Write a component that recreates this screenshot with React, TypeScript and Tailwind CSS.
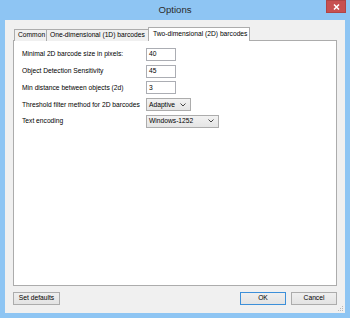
import React from "react";

const font = { fontFamily: '"Liberation Sans", Arial, sans-serif' };

const Chevron = () => (
  <svg width="6" height="4" viewBox="0 0 6 4" className="shrink-0">
    <polyline points="0.5,0.5 3,3 5.5,0.5" fill="none" stroke="#444" strokeWidth="1" />
  </svg>
);

const TextBox = ({ value }: { value: string }) => (
  <div className="w-[30px] h-[13px] border border-[#abadb3] bg-white flex items-center pl-[2px] text-[6.7px] text-black">
    {value}
  </div>
);

const Select = ({ value, width }: { value: string; width: string }) => (
  <div
    className={`${width} h-[13px] border border-[#acacac] bg-gradient-to-b from-[#f2f2f2] to-[#e5e5e5] flex items-center justify-between pl-[2px] pr-[4px] text-[6.7px] text-black`}
  >
    <span>{value}</span>
    <Chevron />
  </div>
);

const rows: { label: string; field: React.ReactNode }[] = [
  { label: "Minimal 2D barcode size in pixels:", field: <TextBox value="40" /> },
  { label: "Object Detection Sensitivity", field: <TextBox value="45" /> },
  { label: "Min distance between objects (2d)", field: <TextBox value="3" /> },
  { label: "Threshold filter method for 2D barcodes", field: <Select value="Adaptive" width="w-[45px]" /> },
  { label: "Text encoding", field: <Select value="Windows-1252" width="w-[73px]" /> },
];

const Button = ({ children, primary, className }: { children: React.ReactNode; primary?: boolean; className?: string }) => (
  <div
    className={`h-[13px] flex items-center justify-center text-[6.7px] text-black bg-gradient-to-b from-[#efefef] to-[#e3e3e3] border ${
      primary ? "border-[#3c8fd9]" : "border-[#acacac]"
    } ${className ?? ""}`}
  >
    {children}
  </div>
);

export default function App() {
  return (
    <div className="w-[350px] h-[318px] bg-[#8ec5f3] flex flex-col px-[5px] pb-[5px]" style={font}>
      {/* title bar */}
      <div className="h-[20px] relative flex items-center justify-center">
        <span className="text-[9.6px] text-[#2b2b2b]">Options</span>
        <div className="absolute right-[-1px] top-0 w-[20px] h-[13px] bg-[#c75050] border border-[#b04545] flex items-center justify-center">
          <svg width="7" height="6" viewBox="0 0 7 6">
            <path d="M1 0.5 L6 5.5 M6 0.5 L1 5.5" stroke="white" strokeWidth="1.5" />
          </svg>
        </div>
      </div>

      {/* client area */}
      <div className="flex-1 bg-[#f0f0f0] flex flex-col px-[8px] pt-[7px] pb-[8px] relative">
        {/* tabs */}
        <div className="flex items-end h-[14px] pl-[1px] relative z-10">
          <div className="w-[33px] h-[12px] border border-[#acacac] border-b-0 bg-[#f0f0f0] flex items-center pl-[3px] text-[6.7px] text-black">
            Common
          </div>
          <div className="w-[102px] h-[12px] border border-[#acacac] border-b-0 border-l-0 bg-[#f0f0f0] flex items-center pl-[3px] text-[6.7px] text-black">
            One-dimensional (1D) barcodes
          </div>
          <div className="w-[102px] h-[14px] border border-[#acacac] border-b-0 bg-white flex items-center pl-[4px] pb-[1px] text-[6.7px] text-black -ml-px">
            Two-dimensional (2D) barcodes
          </div>
        </div>

        {/* panel */}
        <div className="flex-1 -mt-px border border-[#acacac] bg-white pt-[7px] pl-[8px] flex flex-col gap-[3.7px]">
          {rows.map((r) => (
            <div key={r.label} className="flex items-center h-[13px]">
              <div className="w-[124px] text-[6.7px] text-black whitespace-nowrap">{r.label}</div>
              {r.field}
            </div>
          ))}
        </div>

        {/* footer */}
        <div className="flex items-center justify-between mt-[6px]">
          <Button className="w-[47px]">Set defaults</Button>
          <div className="flex gap-[5px]">
            <Button primary className="w-[46px]">OK</Button>
            <Button className="w-[46px]">Cancel</Button>
          </div>
        </div>

        {/* resize grip */}
        <svg className="absolute right-[1px] bottom-[1px]" width="6" height="6" viewBox="0 0 6 6">
          <rect x="4" y="0" width="1" height="1" fill="#b8b8b8" />
          <rect x="2" y="2" width="1" height="1" fill="#b8b8b8" />
          <rect x="4" y="2" width="1" height="1" fill="#b8b8b8" />
          <rect x="0" y="4" width="1" height="1" fill="#b8b8b8" />
          <rect x="2" y="4" width="1" height="1" fill="#b8b8b8" />
          <rect x="4" y="4" width="1" height="1" fill="#b8b8b8" />
        </svg>
      </div>
    </div>
  );
}
